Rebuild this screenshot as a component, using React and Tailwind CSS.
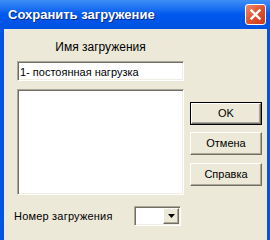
import React from 'react';

const sunken =
  'border border-t-[#aca899] border-l-[#aca899] border-b-white border-r-white shadow-[inset_1px_1px_0_#716f64,inset_-1px_-1px_0_#f1efe2] bg-white';

function XpButton({ label, isDefault, className = '' }) {
  return (
    <div
      className={`h-[23px] w-[72px] ${isDefault ? 'border border-black' : ''} ${className}`}
    >
      <div className="h-full w-full border border-t-white border-l-white border-b-[#716f64] border-r-[#716f64] shadow-[inset_-1px_-1px_0_#aca899] bg-[#ece9d8] flex items-center justify-center text-[11px] leading-[13px] text-black">
        {label}
      </div>
    </div>
  );
}

function App() {
  return (
    <div className="w-[270px] h-[240px] overflow-hidden flex flex-col bg-[#0054e3] font-['Liberation_Sans',Arial,sans-serif]">
      {/* Заголовок окна */}
      <div className="h-[29px] shrink-0 flex items-center justify-between pl-[8px] pr-[4px] bg-gradient-to-b from-[#3d8ff7] via-[#0058ee] to-[#0052e0]">
        <span className="text-white font-bold text-[13px] leading-[16px] [text-shadow:1px_1px_0_#0a2a8a] pt-[1px]">
          Сохранить загружение
        </span>
        <div className="w-[21px] h-[21px] rounded-[3px] border border-white bg-gradient-to-br from-[#ec8a6c] via-[#e0532f] to-[#c8391a] flex items-center justify-center">
          <svg width="11" height="11" viewBox="0 0 11 11">
            <path d="M1.5 1.5 L9.5 9.5 M9.5 1.5 L1.5 9.5" stroke="white" strokeWidth="2.4" strokeLinecap="square" />
          </svg>
        </div>
      </div>

      {/* Тело окна */}
      <div className="flex-1 border-l-4 border-r-[3px] border-[#0054e3] bg-[#ece9d8] flex flex-col text-black">
        <div className="flex pt-[12px] pl-[13px]">
          <div className="w-[167px] flex flex-col">
            <div className="h-[13px] text-[12px] leading-[13px] text-center">Имя загружения</div>
            <div className={`mt-[7px] h-[20px] ${sunken} text-[11px] leading-[18px] pl-[2px] pt-[1px]`}>
              1- постоянная нагрузка
            </div>
            <div className={`mt-[8px] h-[106px] ${sunken}`} />
          </div>
          <div className="ml-[6px] mt-[61px] flex flex-col">
            <XpButton label="OK" isDefault />
            <XpButton label="Отмена" className="mt-[7px]" />
            <XpButton label="Справка" className="mt-[8px]" />
          </div>
        </div>

        <div className="flex items-center mt-[11px] pl-[10px]">
          <div className="w-[120px] text-[11px] leading-[13px] pt-[1px] tracking-[0.2px]">Номер загружения</div>
          <div className={`w-[47px] h-[20px] ${sunken} flex justify-end p-[1px]`}>
            <div className="w-[16px] h-[16px] border border-t-white border-l-white border-b-[#716f64] border-r-[#716f64] shadow-[inset_-1px_-1px_0_#aca899] bg-[#ece9d8] flex items-center justify-center">
              <svg width="7" height="4" viewBox="0 0 7 4">
                <path d="M0 0 H7 L3.5 4 Z" fill="black" />
              </svg>
            </div>
          </div>
        </div>
      </div>
    </div>
  );
}

export default App;
